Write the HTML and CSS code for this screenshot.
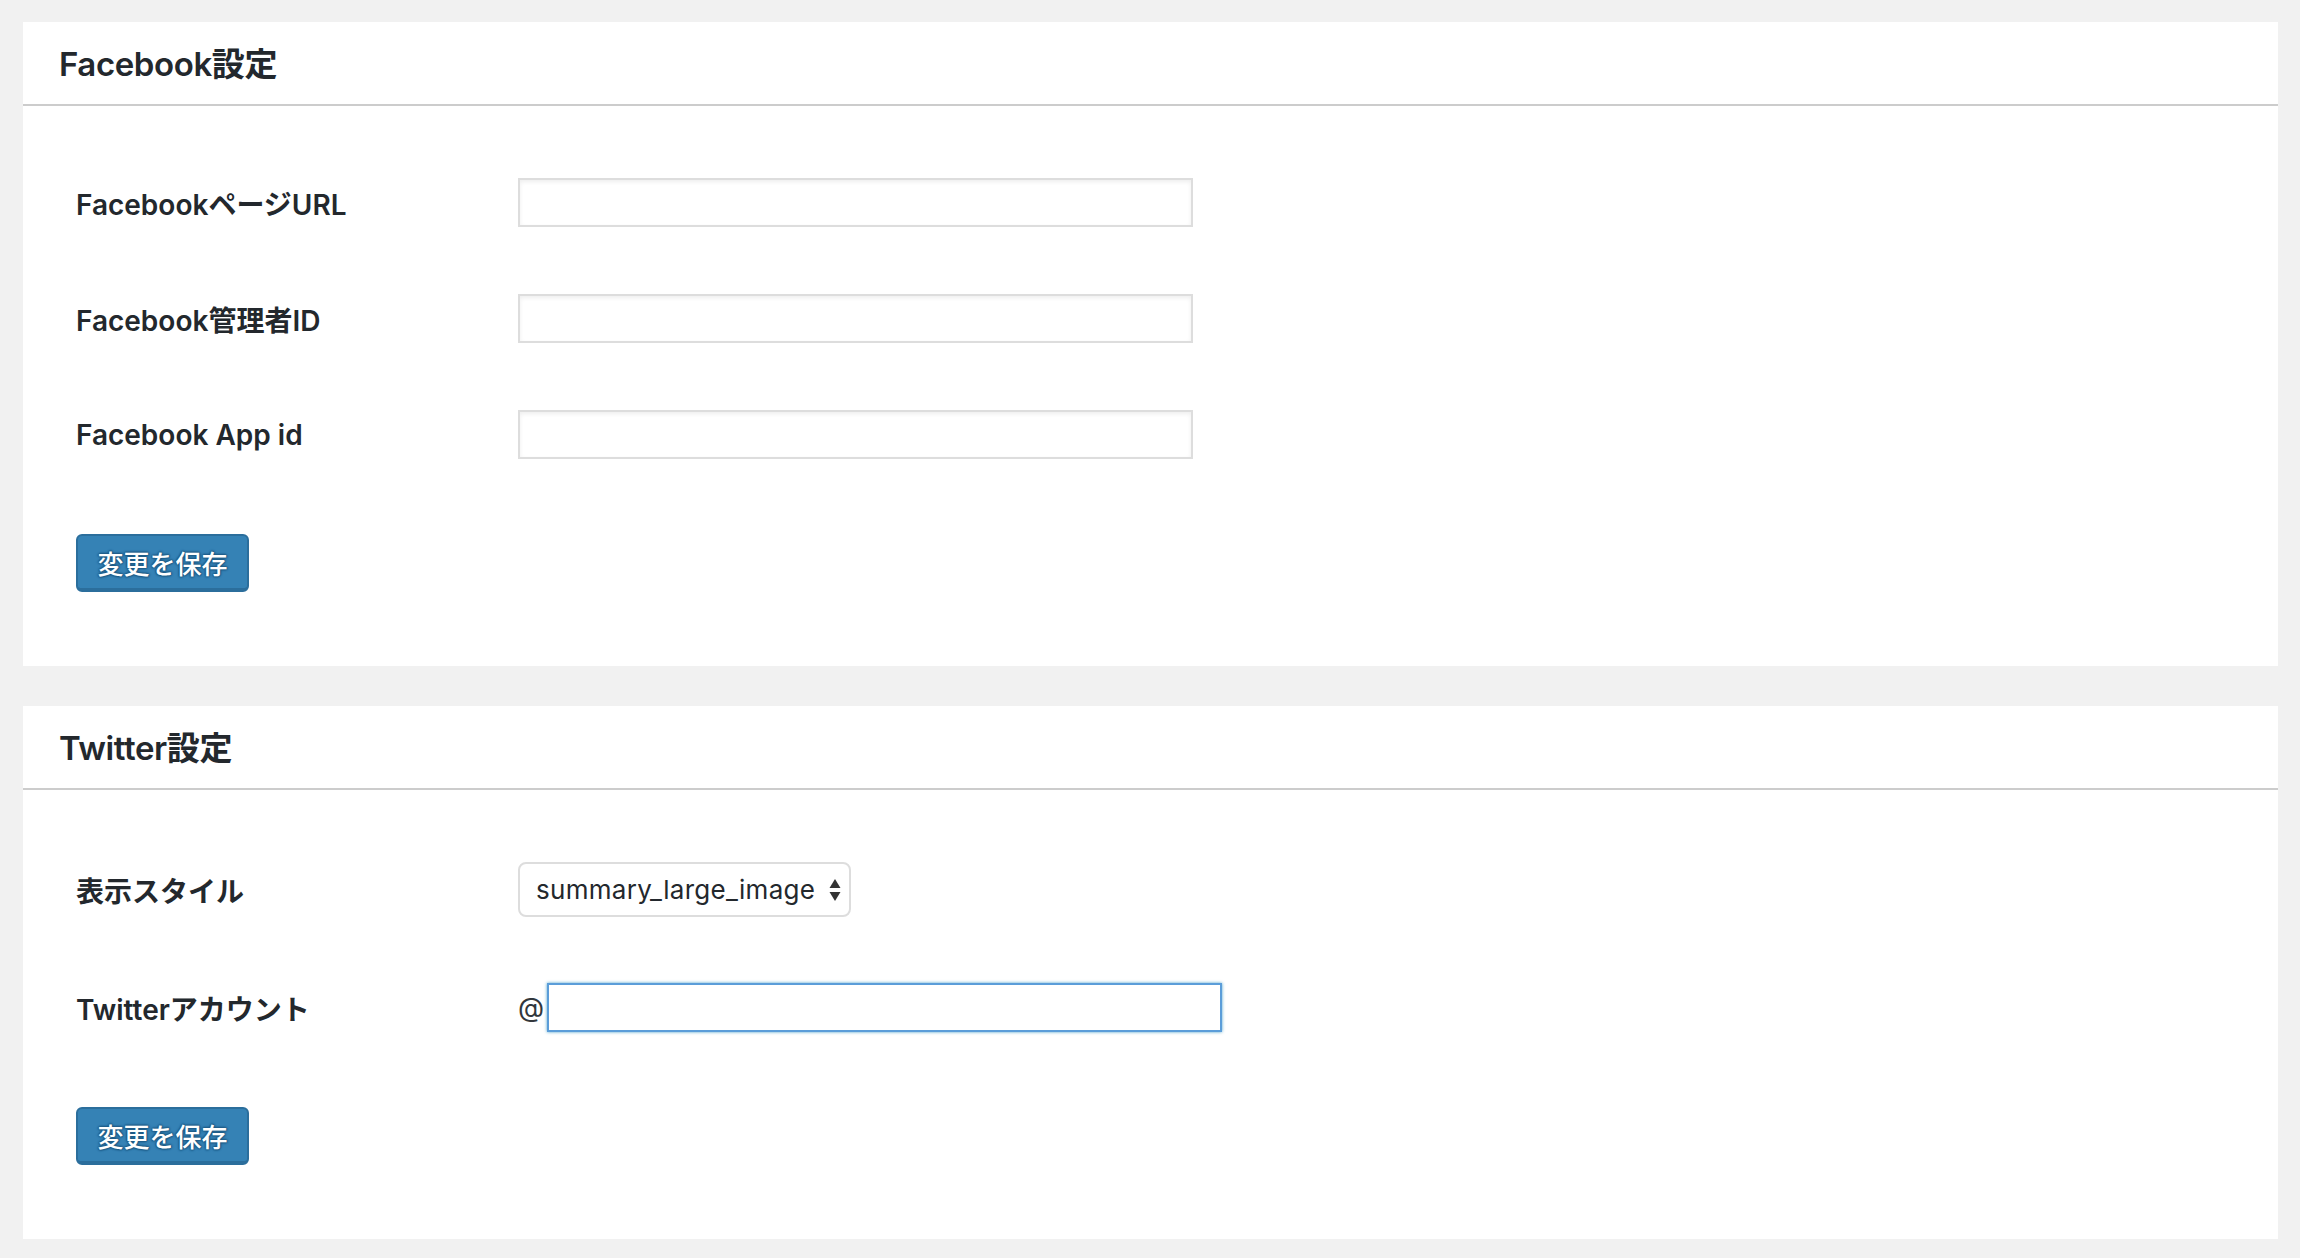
FILE: index.html
```html
<!DOCTYPE html>
<html lang="ja">
<head>
<meta charset="utf-8">
<title>SNS設定</title>
<link rel="stylesheet" href="styles.css">
</head>
<body>
<div class="wrap">
  <section class="card">
    <h2 class="card-title">Facebook設定</h2>
    <form class="card-body">
      <div class="rows">
        <div class="row">
          <label class="row-label">FacebookページURL</label>
          <input class="text-input" type="text">
        </div>
        <div class="row">
          <label class="row-label">Facebook管理者ID</label>
          <input class="text-input" type="text">
        </div>
        <div class="row">
          <label class="row-label">Facebook App id</label>
          <input class="text-input" type="text">
        </div>
      </div>
      <button class="btn-primary" type="button">変更を保存</button>
    </form>
  </section>

  <section class="card">
    <h2 class="card-title">Twitter設定</h2>
    <form class="card-body">
      <div class="rows rows-twitter">
        <div class="row">
          <label class="row-label">表示スタイル</label>
          <div class="select">
            <span class="select-value">summary_large_image</span>
            <svg class="select-arrows" width="12" height="24" viewBox="0 0 12 24"><path d="M6 1 L11.5 10 L0.5 10 Z" fill="#333"/><path d="M6 23 L11.5 14 L0.5 14 Z" fill="#333"/></svg>
          </div>
        </div>
        <div class="row">
          <label class="row-label">Twitterアカウント</label>
          <div class="at-field">
            <span class="at">@</span>
            <input class="text-input focused" type="text">
          </div>
        </div>
      </div>
      <button class="btn-primary" type="button">変更を保存</button>
    </form>
  </section>
</div>
</body>
</html>
```

FILE: styles.css
```css
html, body {
  margin: 0;
  padding: 0;
}
body {
  background: #f1f1f1;
  font-family: "Inter", "Noto Sans CJK JP", sans-serif;
  color: #23282d;
}
.wrap {
  padding: 22px 22px 20px 23px;
  display: flex;
  flex-direction: column;
  gap: 40px;
}
.card {
  background: #fff;
}
.card-title {
  margin: 0;
  height: 84px;
  box-sizing: border-box;
  padding: 22px 0 0 36px;
  font-size: 33px;
  font-weight: 600;
  line-height: 40px;
  letter-spacing: -0.4px;
  border-bottom: 2px solid #cccccc;
  color: #23282d;
}
.card-body {
  padding: 72px 0 74px 53px;
  margin: 0;
}
.rows {
  display: flex;
  flex-direction: column;
  gap: 67px;
}
.rows-twitter {
  gap: 66px;
}
.row {
  display: flex;
  align-items: center;
}
.row-label {
  width: 442px;
  font-size: 28px;
  font-weight: 600;
  color: #23282d;
}
.text-input {
  width: 675px;
  height: 49px;
  box-sizing: border-box;
  border: 2px solid #dddddd;
  box-shadow: inset 0 2px 4px rgba(0, 0, 0, 0.07);
  background: #fff;
  margin: 0;
  padding: 0 10px;
  font-size: 24px;
  outline: none;
}
.text-input.focused {
  border-color: #5b9dd9;
  box-shadow: 0 0 3px rgba(30, 140, 190, 0.8);
}
.select {
  width: 333px;
  height: 55px;
  box-sizing: border-box;
  border: 2px solid #dddddd;
  border-radius: 8px;
  background: #fff;
  display: flex;
  align-items: center;
  justify-content: space-between;
  padding: 0 8px 0 16px;
}
.select-value {
  font-family: "Inter", sans-serif;
  font-size: 26px;
  letter-spacing: 0.3px;
  color: #23282d;
}
.select-arrows {
  flex: none;
}
.at-field {
  display: flex;
  align-items: center;
  gap: 3px;
}
.at {
  font-family: "Inter", sans-serif;
  font-size: 27px;
  color: #32373c;
}
.btn-primary {
  margin-top: 75px;
  display: block;
  width: 173px;
  height: 58px;
  box-sizing: border-box;
  background: #3582b5;
  border: 2px solid #2b6e9c;
  border-bottom-width: 4px;
  border-radius: 6px;
  color: #fff;
  font-family: "Noto Sans CJK JP", sans-serif;
  font-size: 26px;
  font-weight: 500;
  text-shadow: 0 -1px 2px #1d5a85, 1px 0 2px #1d5a85, 0 1px 2px #1d5a85, -1px 0 2px #1d5a85;
  padding: 0;
  cursor: pointer;
}
```
